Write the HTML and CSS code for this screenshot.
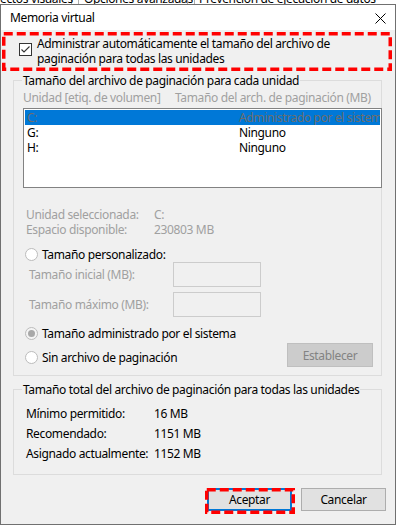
FILE: index.html
```html
<!DOCTYPE html>
<html lang="es">
<head>
<meta charset="utf-8">
<title>Memoria virtual</title>
<link rel="stylesheet" href="styles.css">
</head>
<body>
<div class="strip">
  <span class="tab t1">ectos visuales</span><span class="tab t2">Opciones avanzadas</span><span class="tab t3">Prevención de ejecución de datos</span>
</div>
<div class="dialog">
  <div class="titlebar">
    <span class="title">Memoria virtual</span>
    <svg class="close" width="11" height="11" viewBox="0 0 11 11"><path d="M0.5 0.5 L10.5 10.5 M10.5 0.5 L0.5 10.5" stroke="#000" stroke-width="1" fill="none"/></svg>
  </div>
  <div class="body">
    <div class="autobox">
      <span class="check"><svg width="11" height="11" viewBox="0 0 11 11"><path d="M1.5 5.5 L4 8 L9.5 2.5" stroke="#333" stroke-width="1.1" fill="none"/></svg></span>
      <span class="autotext">Administrar automáticamente el tamaño del archivo de<br>paginación para todas las unidades</span>
      <svg class="dash" width="390" height="39" viewBox="0 0 390 39"><rect x="1.75" y="1.75" width="386.5" height="35.5" fill="none" stroke="#f00" stroke-width="3.5" stroke-dasharray="9 4"/></svg>
    </div>

    <div class="group g1">
      <div class="legend">Tamaño del archivo de paginación para cada unidad</div>
      <div class="cols dis"><span class="c1">Unidad [etiq. de volumen]</span><span class="c2">Tamaño del arch. de paginación (MB)</span></div>
      <div class="list">
        <div class="row sel"><span class="c1">C:</span><span class="c2">Administrado por el sistema</span></div>
        <div class="row"><span class="c1">G:</span><span class="c2">Ninguno</span></div>
        <div class="row"><span class="c1">H:</span><span class="c2">Ninguno</span></div>
      </div>
      <div class="info dis">
        <div class="kv"><span class="k">Unidad seleccionada:</span><span>C:</span></div>
        <div class="kv"><span class="k">Espacio disponible:</span><span>230803 MB</span></div>
      </div>
      <div class="opt first"><span class="radio"></span><span>Tamaño personalizado:</span></div>
      <div class="field f1"><span class="flabel dis">Tamaño inicial (MB):</span><span class="input"></span></div>
      <div class="field f2"><span class="flabel dis">Tamaño máximo (MB):</span><span class="input"></span></div>
      <div class="opt sys"><span class="radio on"></span><span>Tamaño administrado por el sistema</span></div>
      <div class="lastrow">
        <div class="opt none"><span class="radio"></span><span>Sin archivo de paginación</span></div>
        <span class="btn setbtn">Establecer</span>
      </div>
    </div>

    <div class="group g2">
      <div class="legend">Tamaño total del archivo de paginación para todas las unidades</div>
      <div class="totals">
        <div class="tr"><span class="k">Mínimo permitido:</span><span>16 MB</span></div>
        <div class="tr"><span class="k">Recomendado:</span><span>1151 MB</span></div>
        <div class="tr"><span class="k">Asignado actualmente:</span><span>1152 MB</span></div>
      </div>
    </div>

    <div class="buttons">
      <span class="btn ok">Aceptar<svg class="dash okdash" width="90" height="26" viewBox="0 0 90 26"><rect x="1.75" y="1.75" width="86.5" height="22.5" fill="none" stroke="#f00" stroke-width="3.5" stroke-dasharray="9 4"/></svg></span>
      <span class="btn cancel">Cancelar</span>
    </div>
  </div>
</div>
</body>
</html>
```

FILE: styles.css
```css
* { box-sizing: border-box; }
html, body { margin: 0; padding: 0; }
body {
  width: 396px;
  height: 525px;
  overflow: hidden;
  background: #fff;
  font-family: "Segoe UI", "Noto Sans", sans-serif;
  font-size: 12px;
  line-height: 15px;
  letter-spacing: -0.35px;
  color: #000;
}

.strip {
  height: 4px;
  overflow: hidden;
  display: flex;
  background: #fff;
}
.tab {
  display: block;
  margin-top: -9px;
  height: 20px;
  white-space: nowrap;
  border-right: 1px solid #adadad;
}
.t1 { width: 72px; }
.t2 { width: 110px; padding-left: 5px; border-left: 1px solid #adadad; margin-left: 6px; }
.t3 { width: 164px; padding-left: 4px; border-left: 1px solid #adadad; margin-left: 6px; }

.dialog {
  width: 396px;
  height: 521px;
  border: 1px solid #707070;
  background: #f0f0f0;
  display: flex;
  flex-direction: column;
}
.titlebar {
  height: 25px;
  background: #fff;
  display: flex;
  align-items: center;
  padding-left: 9px;
  padding-right: 9px;
}
.title { flex: 1; }
.close { display: block; margin-top: 1px; }

.body { flex: 1; display: flex; flex-direction: column; }

.autobox {
  position: relative;
  margin: 2px 0 0 1px;
  width: 390px;
  height: 39px;
  display: flex;
  align-items: flex-start;
}
.check {
  width: 13px;
  height: 13px;
  border: 1px solid #333;
  background: #fff;
  margin: 11px 0 0 17px;
  display: flex;
}
.check svg { display: block; }
.autotext { margin: 4px 0 0 5px; white-space: nowrap; }
.dash { position: absolute; left: 0; top: 0; overflow: visible; }

.group {
  margin-left: 12px;
  width: 369px;
  border: 1px solid #dcdcdc;
  display: flex;
  flex-direction: column;
  align-items: flex-start;
}
.g1 { margin-top: 9px; height: 296px; }
.g2 { margin-top: 13px; height: 86px; }
.legend {
  margin: -8px 0 0 8px;
  padding: 0 1px;
  background: #f0f0f0;
  white-space: nowrap;
}
.dis { color: #a0a0a0; }

.cols { display: flex; margin: 2px 0 0 9px; white-space: nowrap; }
.cols .c1 { width: 152px; }

.list {
  margin: 3px 0 0 9px;
  width: 359px;
  height: 80px;
  border: 1px solid #828282;
  background: #fff;
  padding: 1px;
  overflow: hidden;
}
.row {
  height: 15px;
  display: flex;
  white-space: nowrap;
  overflow: hidden;
  padding-left: 2px;
}
.row .c1 { width: 212px; flex: none; }
.row.sel { background: #0078d7; color: #6d6d6d; }

.info { margin: 19px 0 0 12px; }
.kv { display: flex; white-space: nowrap; }
.kv .k { width: 128px; }

.opt { display: flex; align-items: center; height: 15px; white-space: nowrap; margin-left: 11px; }
.radio {
  width: 13px;
  height: 13px;
  border: 1px solid #bcbcbc;
  border-radius: 50%;
  background: #fff;
  margin-right: 4px;
  display: flex;
  align-items: center;
  justify-content: center;
  flex: none;
}
.radio.on { background: #f4f4f4; }
.radio.on::after {
  content: "";
  width: 7px;
  height: 7px;
  border-radius: 50%;
  background: #a8a8a8;
}
.opt.first { margin-top: 10px; }
.opt.sys { margin-top: 9px; }

.field { display: flex; align-items: center; margin-left: 15px; }
.f1 { margin-top: 0; }
.f2 { margin-top: 5px; }
.flabel { width: 144px; white-space: nowrap; }
.input {
  width: 88px;
  height: 25px;
  border: 1px solid #cccccc;
  background: #f0f0f0;
}

.lastrow { display: flex; width: 100%; margin-top: 2px; align-items: flex-start; }
.opt.none { margin-top: 7px; }
.btn {
  display: flex;
  align-items: center;
  justify-content: center;
  height: 24px;
  border: 1px solid #adadad;
  background: #e1e1e1;
  white-space: nowrap;
}
.setbtn {
  margin-left: auto;
  margin-right: 8px;
  width: 86px;
  background: #cccccc;
  border-color: #bfbfbf;
  color: #838383;
}

.totals { margin: 6px 0 0 12px; }
.tr { display: flex; height: 20px; align-items: center; white-space: nowrap; }
.tr .k { width: 128px; }

.buttons {
  display: flex;
  justify-content: flex-end;
  gap: 9px;
  margin-top: 13px;
  padding-right: 9px;
}
.buttons .btn { width: 85px; height: 23px; }
.ok { position: relative; border: 2px solid #0078d7; }
.okdash { left: -4px; top: -2px; }
```
